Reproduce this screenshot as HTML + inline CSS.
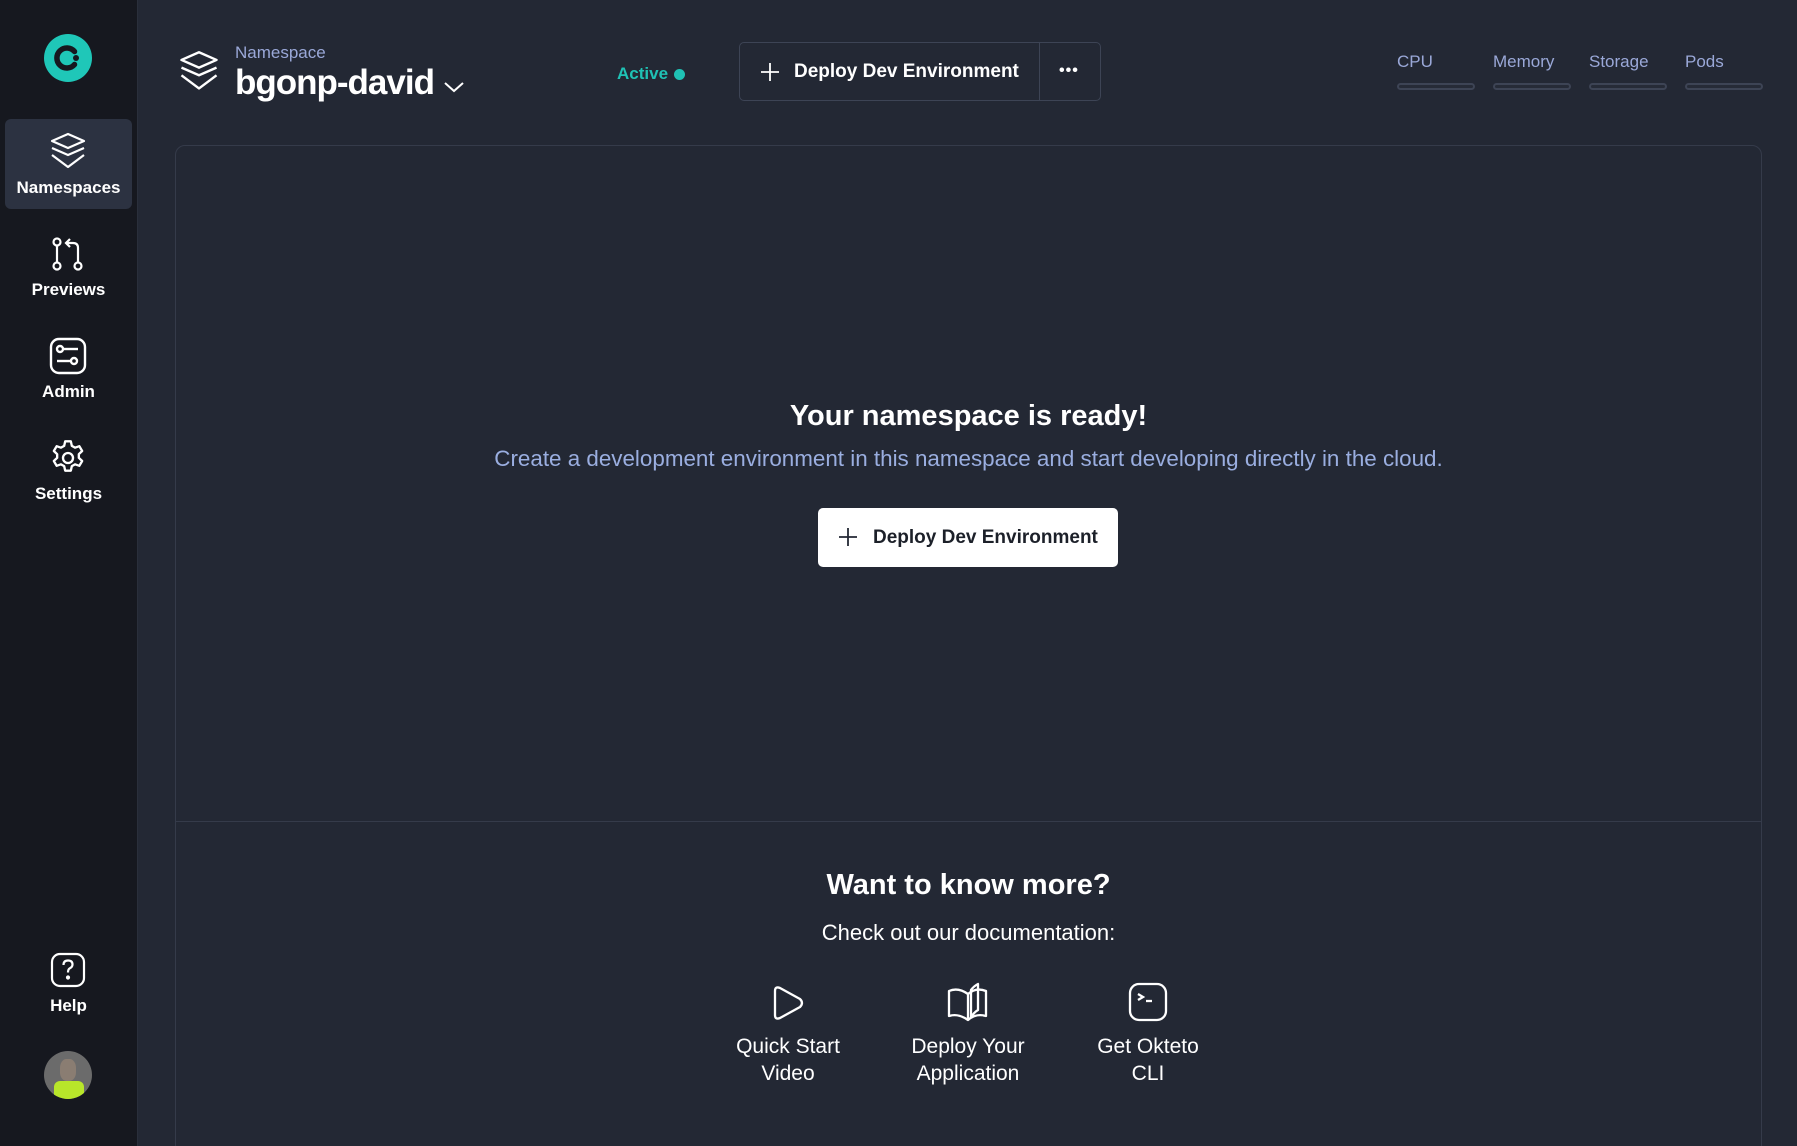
<!DOCTYPE html>
<html><head><meta charset="utf-8"><style>
*{margin:0;padding:0;box-sizing:border-box}
html{width:1797px;height:1146px;overflow:hidden}
body{width:1797px;height:1146px;background:#232834;font-family:"Liberation Sans",sans-serif;color:#fff;position:relative;overflow:hidden}
.side{position:absolute;left:0;top:0;width:138px;height:1146px;background:#16181f;border-right:1px solid #2a2f3b}
.abs{position:absolute}
.nav{position:absolute;left:5px;width:127px;text-align:center;font-weight:bold;font-size:17px}
.c{position:absolute;left:0;width:100%;text-align:center}
.bar{position:absolute;top:83px;width:78px;height:7px;border:2px solid #3d4455;border-radius:4px;background:#262b37}
.lbl{position:absolute;top:52px;font-size:17px;color:#9aa8d8}
.doc{position:absolute;width:160px;text-align:center;font-size:21px;line-height:27px;top:1033px}
</style></head><body>
<div class="side">
  <svg class="abs" style="left:44px;top:34px" width="48" height="48" viewBox="0 0 48 48"><circle cx="24" cy="24" r="24" fill="#1fc7b8"/><path d="M30.5 17.5A10 10 0 1 0 30.5 30.5" stroke="#16181f" stroke-width="5.5" fill="none" stroke-linecap="round"/><circle cx="32" cy="24" r="3" fill="#16181f"/></svg>
  <div class="abs" style="left:5px;top:119px;width:127px;height:90px;background:#2c3241;border-radius:6px"></div>
  <svg class="abs" style="left:49px;top:131px" width="38" height="42" viewBox="0 0 38 42" fill="none" stroke="#fff" stroke-width="2.2" stroke-linejoin="round"><path d="M19 3L35 10L19 17L3 10Z"/><path d="M3 17L19 24L35 17"/><path d="M3 24L19 36L35 24"/></svg>
  <div class="nav" style="top:178px">Namespaces</div>
  <svg class="abs" style="left:50px;top:236px" width="36" height="36" viewBox="0 0 36 36" fill="none" stroke="#fff" stroke-width="2.2"><circle cx="7" cy="6" r="3.5"/><circle cx="7" cy="30" r="3.5"/><circle cx="28" cy="30" r="3.5"/><path d="M7 10V26"/><path d="M28 26V12Q28 7 23 7H17"/><path d="M20 3L16 7L20 11"/></svg>
  <div class="nav" style="top:280px">Previews</div>
  <svg class="abs" style="left:49px;top:337px" width="38" height="38" viewBox="0 0 38 38" fill="none" stroke="#fff" stroke-width="2.4"><rect x="2" y="2" width="34" height="34" rx="8"/><circle cx="11" cy="12" r="3"/><path d="M14 12H29"/><circle cx="25" cy="24" r="3"/><path d="M8 24H22"/></svg>
  <div class="nav" style="top:382px">Admin</div>
  <svg class="abs" style="left:48px;top:438px" width="40" height="40" viewBox="0 0 24 24" fill="none" stroke="#fff" stroke-width="1.4" stroke-linejoin="round"><path d="M10.3 2h3.4l.6 2.7 1.9 1.1 2.6-.9 1.7 2.9-2 1.9v2.2l2 1.9-1.7 2.9-2.6-.9-1.9 1.1-.6 2.7h-3.4l-.6-2.7-1.9-1.1-2.6.9-1.7-2.9 2-1.9v-2.2l-2-1.9 1.7-2.9 2.6.9 1.9-1.1z"/><circle cx="12" cy="12" r="3"/></svg>
  <div class="nav" style="top:484px">Settings</div>
  <svg class="abs" style="left:50px;top:952px" width="36" height="36" viewBox="0 0 36 36" fill="none" stroke="#fff" stroke-width="2.2"><rect x="2" y="2" width="32" height="32" rx="8"/><path d="M13.5 13Q13.5 8.5 18 8.5Q22.5 8.5 22.5 12.5Q22.5 15 19.5 16.5Q18 17.5 18 20.5"/><circle cx="18" cy="25.5" r="1" fill="#fff"/></svg>
  <div class="nav" style="top:996px">Help</div>
  <div class="abs" style="left:44px;top:1051px;width:48px;height:48px;border-radius:50%;overflow:hidden;background:#6b6b6b">
    <div class="abs" style="left:10px;top:30px;width:30px;height:20px;background:#b8e62a;border-radius:6px"></div>
    <div class="abs" style="left:16px;top:8px;width:16px;height:22px;background:#8a7d72;border-radius:40%"></div>
  </div>
</div>

<svg class="abs" style="left:178px;top:49px" width="42" height="46" viewBox="0 0 38 42" fill="none" stroke="#fff" stroke-width="2.2" stroke-linejoin="round"><path d="M19 3L35 10L19 17L3 10Z"/><path d="M3 17L19 24L35 17"/><path d="M3 24L19 36L35 24"/></svg>
<div class="abs" style="left:235px;top:43px;font-size:17px;color:#9aa8d8">Namespace</div>
<div class="abs" style="left:235px;top:63px;font-size:35px;font-weight:bold;letter-spacing:-1px">bgonp-david</div>
<svg class="abs" style="left:443px;top:80px" width="22" height="14" viewBox="0 0 22 14" fill="none" stroke="#fff" stroke-width="2"><path d="M2 3L11 11L20 3"/></svg>

<div class="abs" style="left:617px;top:64px;font-size:17px;font-weight:bold;color:#1fc2b5">Active</div>
<div class="abs" style="left:674px;top:69px;width:11px;height:11px;border-radius:50%;background:#1fc2b5"></div>

<div class="abs" style="left:739px;top:42px;width:362px;height:59px;border:1px solid #3d4455;border-radius:5px"></div>
<div class="abs" style="left:1039px;top:43px;width:1px;height:57px;background:#3d4455"></div>
<svg class="abs" style="left:760px;top:62px" width="20" height="20" viewBox="0 0 20 20" stroke="#fff" stroke-width="1.8"><path d="M10 1V19M1 10H19"/></svg>
<div class="abs" style="left:794px;top:61px;font-size:19px;font-weight:bold">Deploy Dev Environment</div>
<div class="abs" style="left:1059px;top:62px;font-size:16px;font-weight:bold;letter-spacing:1px">•••</div>

<div class="lbl" style="left:1397px">CPU</div>
<div class="lbl" style="left:1493px">Memory</div>
<div class="lbl" style="left:1589px">Storage</div>
<div class="lbl" style="left:1685px">Pods</div>
<div class="bar" style="left:1397px"></div>
<div class="bar" style="left:1493px"></div>
<div class="bar" style="left:1589px"></div>
<div class="bar" style="left:1685px"></div>

<div class="abs" style="left:175px;top:145px;width:1587px;height:1010px;border:1px solid #353b4a;border-radius:10px">
  <div class="abs" style="left:0;top:675px;width:100%;height:1px;background:#353b4a"></div>
</div>

<div class="c" style="left:175px;width:1587px;top:400px;font-size:29px;font-weight:bold">Your namespace is ready!</div>
<div class="c" style="left:175px;width:1587px;top:446px;font-size:22.4px;color:#9aaee0">Create a development environment in this namespace and start developing directly in the cloud.</div>
<div class="abs" style="left:818px;top:508px;width:300px;height:59px;background:#fff;border-radius:5px"></div>
<svg class="abs" style="left:838px;top:527px" width="20" height="20" viewBox="0 0 20 20" stroke="#232834" stroke-width="1.8"><path d="M10 1V19M1 10H19"/></svg>
<div class="abs" style="left:873px;top:527px;font-size:19px;font-weight:bold;color:#1c2029">Deploy Dev Environment</div>

<div class="c" style="left:175px;width:1587px;top:869px;font-size:29px;font-weight:bold">Want to know more?</div>
<div class="c" style="left:175px;width:1587px;top:920px;font-size:22px">Check out our documentation:</div>

<svg class="abs" style="left:770px;top:984px" width="36" height="38" viewBox="0 0 36 38" fill="none" stroke="#fff" stroke-width="2.3" stroke-linejoin="round"><path d="M5 7Q5 2 10 4L30 15Q34 19 30 23L10 34Q5 36 5 31Z"/></svg>
<svg class="abs" style="left:946px;top:982px" width="44" height="42" viewBox="0 0 44 42" fill="none" stroke="#fff" stroke-width="2.3" stroke-linejoin="round"><path d="M22 38Q12 31 3 34V9Q12 5 22 12Q30 5 40 9V34Q30 31 22 38Z"/><path d="M22 12V38"/><path d="M25 36V8Q28 4 32 2V28Q27 31 25 36"/></svg>
<svg class="abs" style="left:1128px;top:982px" width="40" height="40" viewBox="0 0 40 40" fill="none" stroke="#fff" stroke-width="2.3"><rect x="2" y="2" width="36" height="36" rx="9"/><path d="M10 12L15 15L10 18"/><path d="M18 19H24"/></svg>

<div class="doc" style="left:708px">Quick Start<br>Video</div>
<div class="doc" style="left:888px">Deploy Your<br>Application</div>
<div class="doc" style="left:1068px">Get Okteto<br>CLI</div>
</body></html>
